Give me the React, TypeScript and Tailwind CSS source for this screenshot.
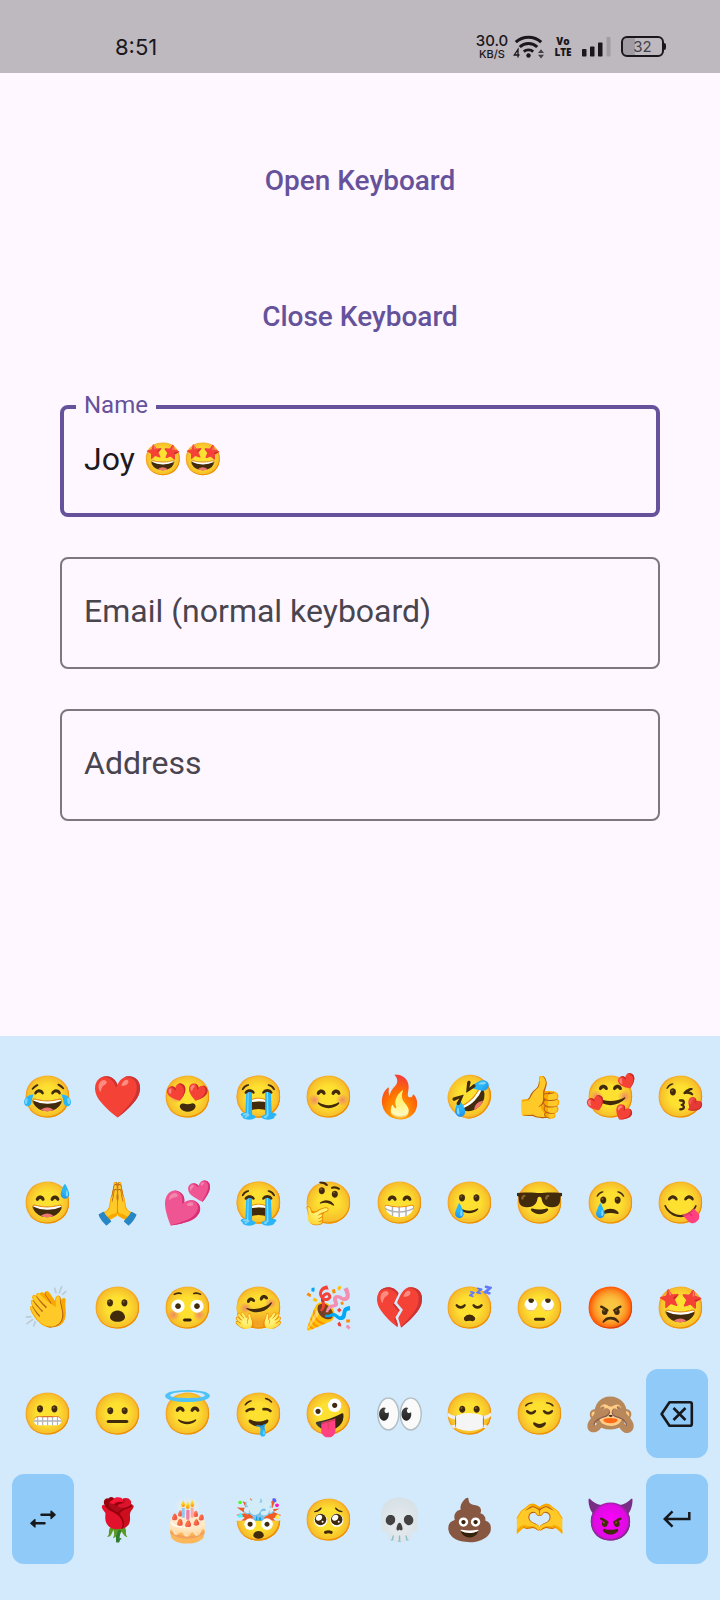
import { useState } from "react";
import type { ReactNode } from "react";

const ROWS: string[][] = [
  ["😂", "❤️", "😍", "😭", "😊", "🔥", "🤣", "👍", "🥰", "😘"],
  ["😅", "🙏", "💕", "😭", "🤔", "😁", "🥲", "😎", "😢", "😋"],
  ["👏", "😮", "😳", "🤗", "🎉", "💔", "😴", "🙄", "😡", "🤩"],
  ["😬", "😐", "😇", "🤤", "🤪", "👀", "😷", "😌", "🙈", "backspace"],
  ["switch", "🌹", "🎂", "🤯", "🥺", "💀", "💩", "🫶", "😈", "enter"],
];

const ACTIONS: Record<string, { label: string; icon: ReactNode }> = {
  backspace: {
    label: "Backspace",
    icon: (
      <svg viewBox="0 0 36 36" className="size-9" fill="none" stroke="currentColor" strokeWidth="2.6" aria-hidden="true">
        <path d="M10.500 6.300H31a1.800 1.800 0 0 1 1.800 1.800v19.800a1.800 1.800 0 0 1-1.800 1.800H10.500L2.600 18zM14.500 12l12 12M26.500 12l-12 12" strokeLinejoin="round" />
      </svg>
    ),
  },
  switch: {
    label: "Switch keyboard",
    icon: (
      <svg viewBox="0 0 28 28" className="size-7" fill="none" stroke="currentColor" strokeWidth="2.500" strokeLinecap="round" aria-hidden="true">
        <path d="M12.500 9.800h11M15.500 18.300h-11" />
        <path d="M22 6 26.200 9.800 22 13.600zM6 14.500 1.800 18.300 6 22.100z" fill="currentColor" strokeWidth="1.200" strokeLinejoin="round" />
      </svg>
    ),
  },
  enter: {
    label: "Enter",
    icon: (
      <svg viewBox="0 0 36 36" className="size-9" fill="none" stroke="currentColor" strokeWidth="2.500" aria-hidden="true">
        <path d="M30.300 11v7H6.500M13.500 10.300 5.800 18l7.700 7.700" />
      </svg>
    ),
  },
};

function StatusBar() {
  return (
    <header className="flex h-[73px] items-center justify-between bg-[#beb8bf] pt-5 pr-[54px] pl-[115px] text-[#1a171c]">
      <time className="font-[Inter,sans-serif] text-[22px] leading-7">8:51</time>
      <div className="flex items-center">
        <div className="flex w-[34px] flex-col items-center font-[Inter,sans-serif] font-medium">
          <span className="text-[15px] leading-[14px]">30.0</span>
          <span className="text-[11px] leading-3">KB/S</span>
        </div>
        <svg viewBox="0 0 32 24" className="ml-1 h-6 w-8" fill="none" stroke="currentColor" aria-label="Wi-Fi 4">
          <path d="M2.800 7.200a18.500 18.500 0 0 1 25.400 0" strokeWidth="3" />
          <path d="M6.800 12a12.500 12.500 0 0 1 17.400 0" strokeWidth="3" />
          <path d="M10.800 16.600a7 7 0 0 1 9.400 0" strokeWidth="2.800" />
          <circle cx="15.500" cy="20.500" r="2.200" fill="currentColor" stroke="none" />
          <path d="M28 14.200l3 3.800h-6zM28 23.500l3-3.800h-6z" fill="currentColor" stroke="none" opacity="0.75" />
          <path d="M5 22.500v-8L1.300 20h5.200" strokeWidth="1.300" />
        </svg>
        <div className="ml-2 flex w-5 flex-col items-center font-['Open_Sans',sans-serif] text-[10px] font-extrabold">
          <span className="leading-[11px]">Vo</span>
          <span className="leading-[11px]">LTE</span>
        </div>
        <svg viewBox="0 0 30 21" className="ml-2 h-[21px] w-[30px]" fill="currentColor" aria-label="Signal strength">
          <rect x="1" y="13" width="4.500" height="7.500" rx="0.800" />
          <rect x="9" y="10.500" width="4.500" height="10" rx="0.800" />
          <rect x="17" y="6.500" width="4.500" height="14" rx="0.800" />
          <rect x="25.500" y="1" width="4" height="19.500" rx="0.800" fill="#a29da4" />
        </svg>
        <div className="ml-[10px] flex items-center">
          <div className="flex h-[21px] w-[43px] items-center justify-center rounded-md border-2 border-current bg-linear-to-r from-[#a19ca3] from-32% to-transparent to-32% font-[Inter,sans-serif] text-[15px] leading-4">
            <span className="text-[#454147]">32</span>
          </div>
          <div className="h-[7px] w-0.5 rounded-r-sm bg-current" />
        </div>
      </div>
    </header>
  );
}

type FieldProps = {
  id: string;
  label: string;
  value: string;
  active: boolean;
  onChange: (value: string) => void;
  onFocus: () => void;
};

function Field({ id, label, value, active, onChange, onFocus }: FieldProps) {
  const raised = active || value !== "";
  return (
    <div className="relative w-full">
      <input
        id={id}
        type="text"
        value={value}
        onChange={(e) => onChange(e.target.value)}
        onFocus={onFocus}
        className={
          active
            ? "block h-28 w-full rounded-lg border-4 border-[#65529b] bg-transparent px-5 pb-1 text-[32px] text-[#1d1b20] outline-none"
            : "block h-28 w-full rounded-lg border-2 border-[#7d7782] bg-transparent px-[22px] pb-1 text-[32px] text-[#1d1b20] outline-none"
        }
      />
      <label
        htmlFor={id}
        className={
          raised
            ? "pointer-events-none absolute -top-[14px] left-4 bg-[#fef7ff] px-2 text-2xl leading-7 text-[#65529b]"
            : "pointer-events-none absolute inset-y-0 left-6 flex items-center pb-1 text-[32px] text-[#49454f]"
        }
      >
        {label}
      </label>
    </div>
  );
}

export default function App() {
  const [open, setOpen] = useState(true);
  const [active, setActive] = useState("name");
  const [values, setValues] = useState<Record<string, string>>({ name: "Joy 🤩🤩", email: "", address: "" });

  const fields = [
    { id: "name", label: "Name" },
    { id: "email", label: "Email (normal keyboard)" },
    { id: "address", label: "Address" },
  ];

  const press = (key: string) => {
    if (key === "switch" || key === "enter") return;
    setValues((prev) => {
      const text = prev[active];
      const next = key === "backspace" ? Array.from(text).slice(0, -1).join("") : text + key;
      return { ...prev, [active]: next };
    });
  };

  return (
    <div className="flex min-h-screen flex-col bg-[#fef7ff] font-[Roboto,sans-serif]">
      <StatusBar />
      <main className="flex flex-1 flex-col items-center gap-10 px-[60px] pt-15">
        <button type="button" onClick={() => setOpen(true)} className="h-24 px-6 text-[28px] font-medium text-[#65529b]">
          Open Keyboard
        </button>
        <button type="button" onClick={() => setOpen(false)} className="h-24 px-6 text-[28px] font-medium text-[#65529b]">
          Close Keyboard
        </button>
        {fields.map((f) => (
          <Field
            key={f.id}
            id={f.id}
            label={f.label}
            value={values[f.id]}
            active={active === f.id}
            onFocus={() => setActive(f.id)}
            onChange={(v) => setValues((prev) => ({ ...prev, [f.id]: v }))}
          />
        ))}
      </main>
      {open && (
        <section aria-label="Emoji keyboard" className="grid min-h-[564px] grid-cols-10 grid-rows-5 gap-x-2 gap-y-4 bg-[#d3e9fc] px-3 pt-4 pb-9">
          {ROWS.flat().map((key, i) => {
            const action = ACTIONS[key];
            return action ? (
              <button
                key={i}
                type="button"
                aria-label={action.label}
                onClick={() => press(key)}
                className="flex items-center justify-center rounded-xl bg-[#90caf9] text-[#17191c]"
              >
                {action.icon}
              </button>
            ) : (
              <button
                key={i}
                type="button"
                onClick={() => press(key)}
                className="flex items-center justify-center pt-0.5 pl-2 text-[41px] leading-none"
              >
                {key}
              </button>
            );
          })}
        </section>
      )}
    </div>
  );
}
